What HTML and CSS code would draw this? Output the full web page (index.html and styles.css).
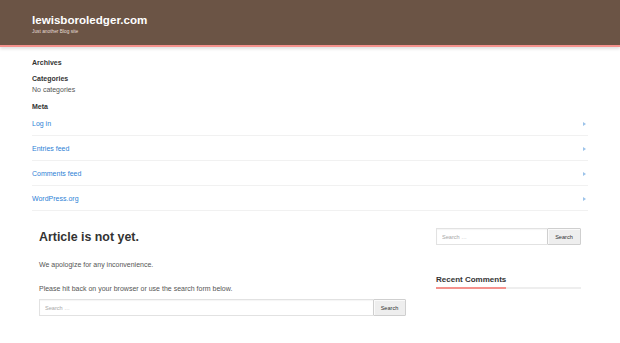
FILE: index.html
```html
<!DOCTYPE html>
<html lang="en">
<head>
  <meta charset="UTF-8" />
  <meta name="viewport" content="width=device-width, initial-scale=1.0"/>
  <title>lewisboroledger.com</title>
  <link rel="stylesheet" href="styles.css">
</head>
<body>

  <header class="site-header">
    <div class="site-title">lewisboroledger.com</div>
    <div class="site-desc">Just another Blog site</div>
  </header>

  <!-- widgets above the content -->
  <div class="top-widgets">
    <h2 class="widget-title first">Archives</h2>

    <h2 class="widget-title">Categories</h2>
    <p class="widget-text">No categories</p>

    <h2 class="widget-title">Meta</h2>
    <ul class="meta-list">
      <li><a href="#">Log in</a></li>
      <li><a href="#">Entries feed</a></li>
      <li><a href="#">Comments feed</a></li>
      <li><a href="#">WordPress.org</a></li>
    </ul>
  </div>

  <div class="main-wrap">
    <main class="content">
      <h1 class="page-title">Article is not yet.</h1>
      <p class="text first">We apologize for any inconvenience.</p>
      <p class="text">Please hit back on your browser or use the search form below.</p>
      <form class="search-form">
        <input type="search" placeholder="Search …" />
        <button type="submit">Search</button>
      </form>
    </main>

    <aside class="sidebar">
      <form class="search-form">
        <input type="search" placeholder="Search …" />
        <button type="submit">Search</button>
      </form>
      <h2 class="sidebar-title"><span>Recent Comments</span></h2>
    </aside>
  </div>

</body>
</html>
```

FILE: styles.css
```css
body {
  margin: 0;
  background-color: white;
  font-family: 'Liberation Sans', Arial, sans-serif;
  color: #555;
}

.site-header {
  background-color: #6b5445;
  height: 47px;
  padding: 13px 0 0 32px;
  box-sizing: border-box;
  border-bottom: 2px solid #f4918c;
  box-shadow: 0 2px 3px rgba(0, 0, 0, 0.12);
}

.site-title {
  color: white;
  font-size: 11.6px;
  font-weight: bold;
  line-height: 14px;
}

.site-desc {
  color: #e6ddd6;
  font-size: 4.8px;
  line-height: 6px;
  margin-top: 2px;
}

.top-widgets {
  padding: 0 32px;
}

.widget-title {
  font-size: 7px;
  line-height: 9px;
  font-weight: bold;
  color: #333;
  margin: 7px 0 0;
}

.widget-title.first {
  margin-top: 11px;
}

.widget-text {
  font-size: 7px;
  line-height: 9px;
  margin: 2px 0 8px;
}

.meta-list {
  list-style: none;
  margin: 0;
  padding: 0;
}

.meta-list li {
  position: relative;
  font-size: 7px;
  line-height: 9px;
  padding: 8px 0 7px;
  border-bottom: 1px solid #f1f1f1;
}

.meta-list li::after {
  content: "";
  position: absolute;
  right: 2px;
  top: 11px;
  border-left: 3px solid #9cc3ea;
  border-top: 2px solid transparent;
  border-bottom: 2px solid transparent;
}

.meta-list a {
  color: #2e7fd6;
  text-decoration: none;
}

.main-wrap {
  display: grid;
  grid-template-columns: 381px 159px;
  gap: 16px;
  padding: 17px 32px 0;
}

.content, .sidebar {
  padding: 0 7px;
}

.page-title {
  font-size: 12.4px;
  line-height: 15px;
  color: #333;
  margin: 2px 0 0;
}

.text {
  font-size: 7px;
  line-height: 9px;
  margin: 15px 0 0;
}

.search-form {
  display: flex;
  height: 17px;
}

.content .search-form {
  margin-top: 6px;
}

.search-form input {
  flex: 1;
  min-width: 0;
  height: 17px;
  box-sizing: border-box;
  border: 1px solid #e2e2e2;
  border-right: none;
  padding: 0 5px;
  font-family: inherit;
  font-size: 5.6px;
  color: #555;
  background: white;
  box-shadow: inset 0 1px 1px rgba(0, 0, 0, 0.04);
}

.search-form input::placeholder {
  color: #a8a8a8;
}

.search-form button {
  width: 34px;
  height: 17px;
  box-sizing: border-box;
  border: 1px solid #cfcfcf;
  border-radius: 1px;
  background-color: #eeeeee;
  font-family: inherit;
  font-size: 5.6px;
  color: #333;
  padding: 0;
  box-shadow: inset 1px 1px 0 #fafafa;
}

.content .search-form button {
  width: 33px;
}

.sidebar-title {
  font-size: 8px;
  line-height: 10px;
  font-weight: bold;
  color: #333;
  margin: 30px 0 0;
  border-bottom: 2px solid #eeeeee;
}

.sidebar-title span {
  display: inline-block;
  vertical-align: bottom;
  padding-bottom: 2px;
  margin-bottom: -2px;
  border-bottom: 2px solid #f4918c;
}
```
